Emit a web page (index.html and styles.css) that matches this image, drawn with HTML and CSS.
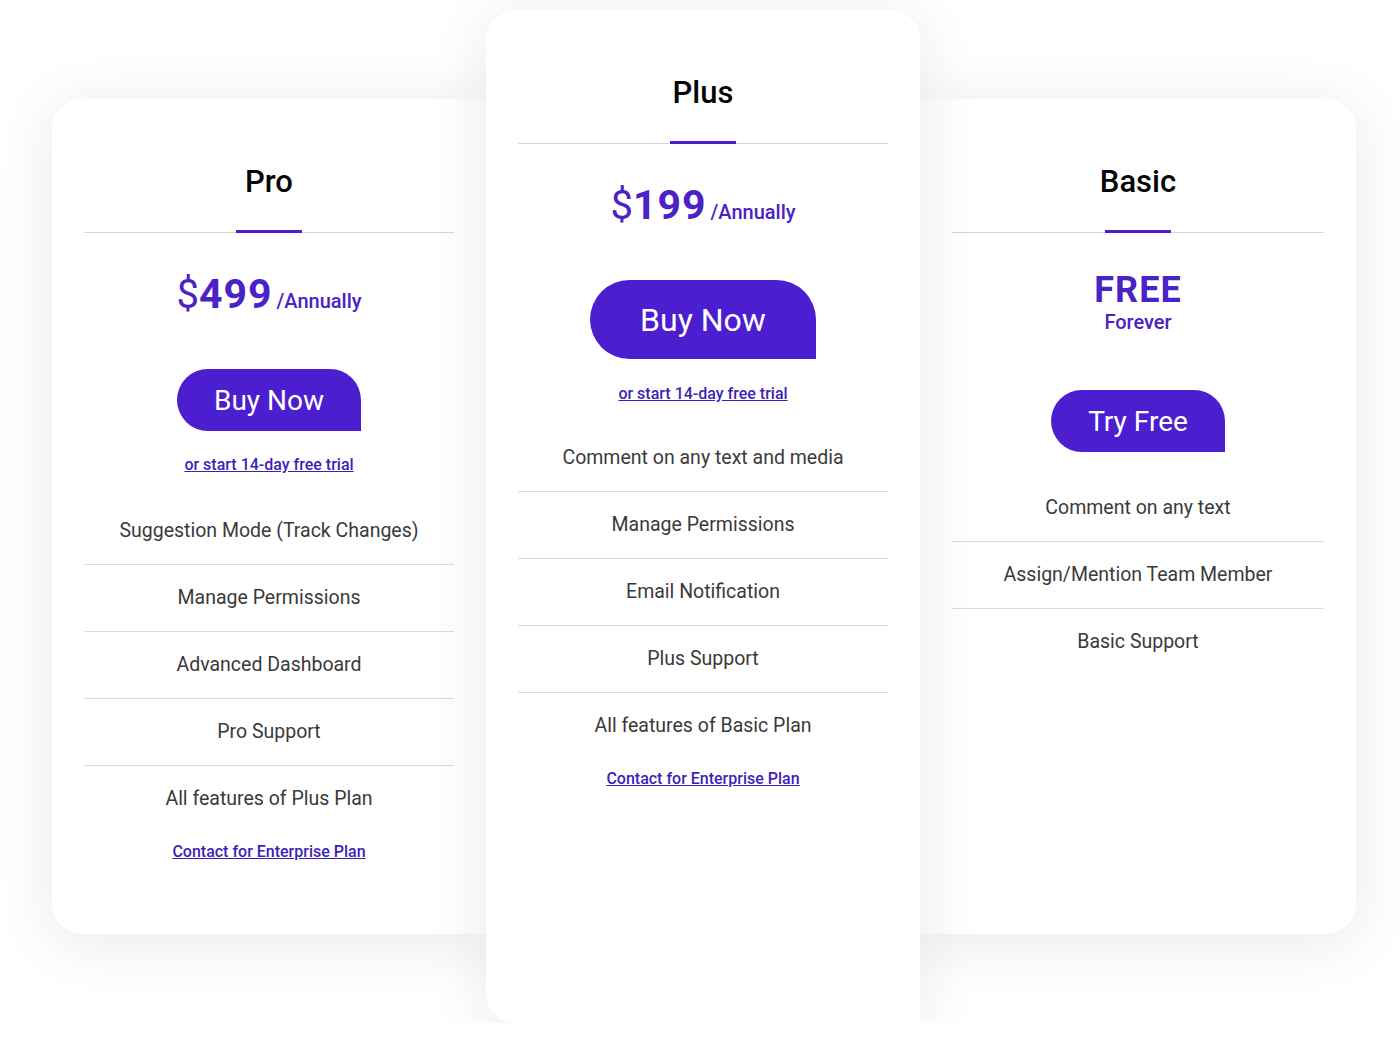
FILE: index.html
```html
<!DOCTYPE html>
<html lang="en">
<head>
  <meta charset="UTF-8">
  <meta name="viewport" content="width=device-width, initial-scale=1.0">
  <title>Pricing</title>
  <link rel="stylesheet" href="styles.css">
</head>
<body>
  <div class="pricing">
    <section class="plan plan-side plan-pro">
      <header class="plan-head"><h2>Pro</h2></header>
      <div class="price"><span class="cur">$</span><span class="amt">499</span><span class="per">/Annually</span></div>
      <a class="btn" href="#">Buy Now</a>
      <a class="trial" href="#">or start 14-day free trial</a>
      <ul class="features">
        <li>Suggestion Mode (Track Changes)</li>
        <li>Manage Permissions</li>
        <li>Advanced Dashboard</li>
        <li>Pro Support</li>
        <li>All features of Plus Plan</li>
      </ul>
      <a class="enterprise" href="#">Contact for Enterprise Plan</a>
    </section>

    <section class="plan plan-plus">
      <header class="plan-head"><h2>Plus</h2></header>
      <div class="price"><span class="cur">$</span><span class="amt">199</span><span class="per">/Annually</span></div>
      <a class="btn btn-lg" href="#">Buy Now</a>
      <a class="trial" href="#">or start 14-day free trial</a>
      <ul class="features">
        <li>Comment on any text and media</li>
        <li>Manage Permissions</li>
        <li>Email Notification</li>
        <li>Plus Support</li>
        <li>All features of Basic Plan</li>
      </ul>
      <a class="enterprise" href="#">Contact for Enterprise Plan</a>
    </section>

    <section class="plan plan-side plan-basic">
      <header class="plan-head"><h2>Basic</h2></header>
      <div class="price price-free">
        <span class="free">FREE</span>
        <span class="forever">Forever</span>
      </div>
      <a class="btn btn-free" href="#">Try Free</a>
      <ul class="features features-free">
        <li>Comment on any text</li>
        <li>Assign/Mention Team Member</li>
        <li>Basic Support</li>
      </ul>
    </section>
  </div>
</body>
</html>
```

FILE: styles.css
```css
body {
  margin: 0;
  background: #ffffff;
  font-family: Roboto, "Noto Sans", Arial, sans-serif;
  color: #3a3a3a;
}
.pricing {
  display: flex;
  align-items: flex-start;
  padding-left: 52px;
}
.plan {
  box-sizing: border-box;
  width: 434px;
  padding: 0 32px;
  background: #ffffff;
  display: flex;
  flex-direction: column;
  align-items: center;
  box-shadow: 0 8px 60px rgba(40, 30, 70, 0.1);
}
.plan-side {
  margin-top: 99px;
  height: 835px;
}
.plan-pro {
  border-radius: 30px 0 0 30px;
}
.plan-basic {
  width: 436px;
  border-radius: 0 30px 30px 0;
}
.plan-plus {
  position: relative;
  z-index: 2;
  margin-top: 10px;
  height: 1013px;
  border-radius: 30px 30px 0 30px;
}

.plan-head {
  align-self: stretch;
  position: relative;
  text-align: center;
  border-bottom: 1px solid #d8d8dc;
  padding-top: 63px;
  height: 70px;
}
.plan-head h2 {
  margin: 0;
  font-size: 31px;
  line-height: 40px;
  font-weight: 500;
  color: #050505;
}
.plan-head::after {
  content: "";
  position: absolute;
  left: 50%;
  bottom: -1px;
  width: 66px;
  height: 3px;
  margin-left: -33px;
  background: #4b1fcf;
}

.price {
  margin-top: 37px;
  height: 48px;
  display: flex;
  align-items: baseline;
  justify-content: center;
  color: #4a22c6;
}
.price .cur {
  font-size: 40px;
  font-weight: 400;
  line-height: 48px;
}
.price .amt {
  font-size: 41px;
  font-weight: 700;
  line-height: 48px;
  letter-spacing: 1px;
}
.price .per {
  margin-left: 4px;
  font-size: 20px;
  font-weight: 500;
}
.price-free {
  flex-direction: column;
  align-items: center;
  height: auto;
}
.price-free .free {
  font-size: 36px;
  line-height: 40px;
  font-weight: 700;
  letter-spacing: 1px;
}
.price-free .forever {
  font-size: 20px;
  line-height: 24px;
  font-weight: 500;
}

.btn {
  margin-top: 51px;
  height: 62px;
  padding: 0 37px;
  display: flex;
  align-items: center;
  background: #4b1fd0;
  color: #ffffff;
  font-size: 28px;
  text-decoration: none;
  border-radius: 31px 31px 0 31px;
}
.btn-lg {
  height: 79px;
  padding: 0 50px;
  font-size: 32px;
  border-radius: 40px 40px 0 40px;
}
.btn-free {
  margin-top: 56px;
}

.trial {
  margin-top: 24px;
  font-size: 16px;
  line-height: 20px;
  font-weight: 500;
  color: #3d1fb8;
}
.plan-plus .trial {
  margin-top: 25px;
}

.features {
  align-self: stretch;
  list-style: none;
  margin: 23px 0 0;
  padding: 0;
  text-align: center;
}
.plan-plus .features {
  margin-top: 21px;
}
.features-free {
  margin-top: 23px;
}
.features-free li {
  padding: 20px 0 21px;
}
.features li {
  padding: 20px 0;
  font-size: 19.5px;
  line-height: 26px;
  color: #3a3a3a;
  border-bottom: 1px solid #dcdcdf;
}
.features li:last-child {
  border-bottom: none;
}

.enterprise {
  margin-top: 10px;
  font-size: 16px;
  line-height: 20px;
  font-weight: 500;
  color: #3d1fb8;
}
```
